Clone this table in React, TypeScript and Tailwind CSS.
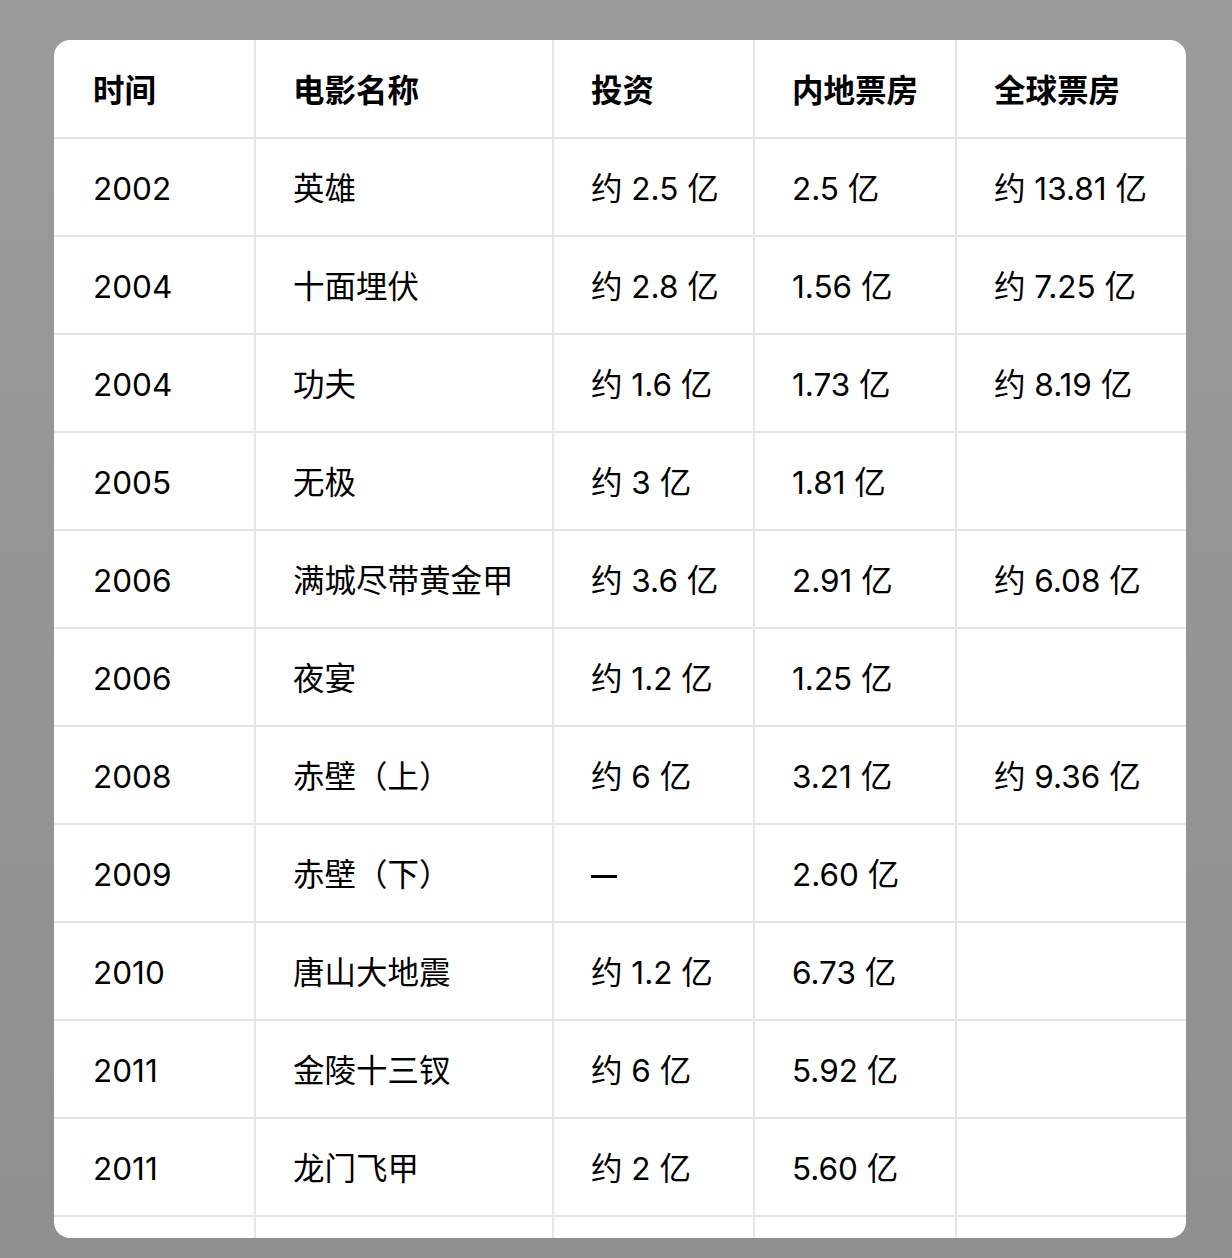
const headers = ["时间", "电影名称", "投资", "内地票房", "全球票房"];

const rows: string[][] = [
  ["2002", "英雄", "约 2.5 亿", "2.5 亿", "约 13.81 亿"],
  ["2004", "十面埋伏", "约 2.8 亿", "1.56 亿", "约 7.25 亿"],
  ["2004", "功夫", "约 1.6 亿", "1.73 亿", "约 8.19 亿"],
  ["2005", "无极", "约 3 亿", "1.81 亿", ""],
  ["2006", "满城尽带黄金甲", "约 3.6 亿", "2.91 亿", "约 6.08 亿"],
  ["2006", "夜宴", "约 1.2 亿", "1.25 亿", ""],
  ["2008", "赤壁（上）", "约 6 亿", "3.21 亿", "约 9.36 亿"],
  ["2009", "赤壁（下）", "—", "2.60 亿", ""],
  ["2010", "唐山大地震", "约 1.2 亿", "6.73 亿", ""],
  ["2011", "金陵十三钗", "约 6 亿", "5.92 亿", ""],
  ["2011", "龙门飞甲", "约 2 亿", "5.60 亿", ""],
  ["", "", "", "", ""],
];

const cellBase = "flex items-center pt-[4px] border-b-2 border-[#e6e6e6] whitespace-nowrap";

const Cell = ({ text, col, head }: { text: string; col: number; head?: boolean }) => (
  <div
    className={`${cellBase} ${head ? "h-[99px] font-semibold" : "h-[98px]"} ${col < 4 ? "border-r-2" : ""} ${col === 0 ? "pl-[39px]" : "pl-[37px]"}`}
  >
    {text === "—" ? <span className="inline-block w-[26px] h-[3px] bg-black mt-[2px]"></span> : text}
  </div>
);

export default function App() {
  return (
    <div className="h-[1258px] w-full bg-gradient-to-b from-[#9b9b9b] to-[#8f8f8f] pt-[40px] pl-[54px]">
      <div
        className="w-[1132px] h-[1198px] bg-white rounded-[16px] overflow-hidden text-[31.5px] text-black"
        style={{ fontFamily: 'Inter, "Noto Sans CJK SC", sans-serif' }}
      >
        <div className="grid grid-cols-[202px_298px_201px_202px_229px]">
          {headers.map((h, i) => (
            <Cell key={h} text={h} col={i} head />
          ))}
          {rows.map((r, ri) =>
            r.map((c, ci) => <Cell key={`${ri}-${ci}`} text={c} col={ci} />)
          )}
        </div>
      </div>
    </div>
  );
}
